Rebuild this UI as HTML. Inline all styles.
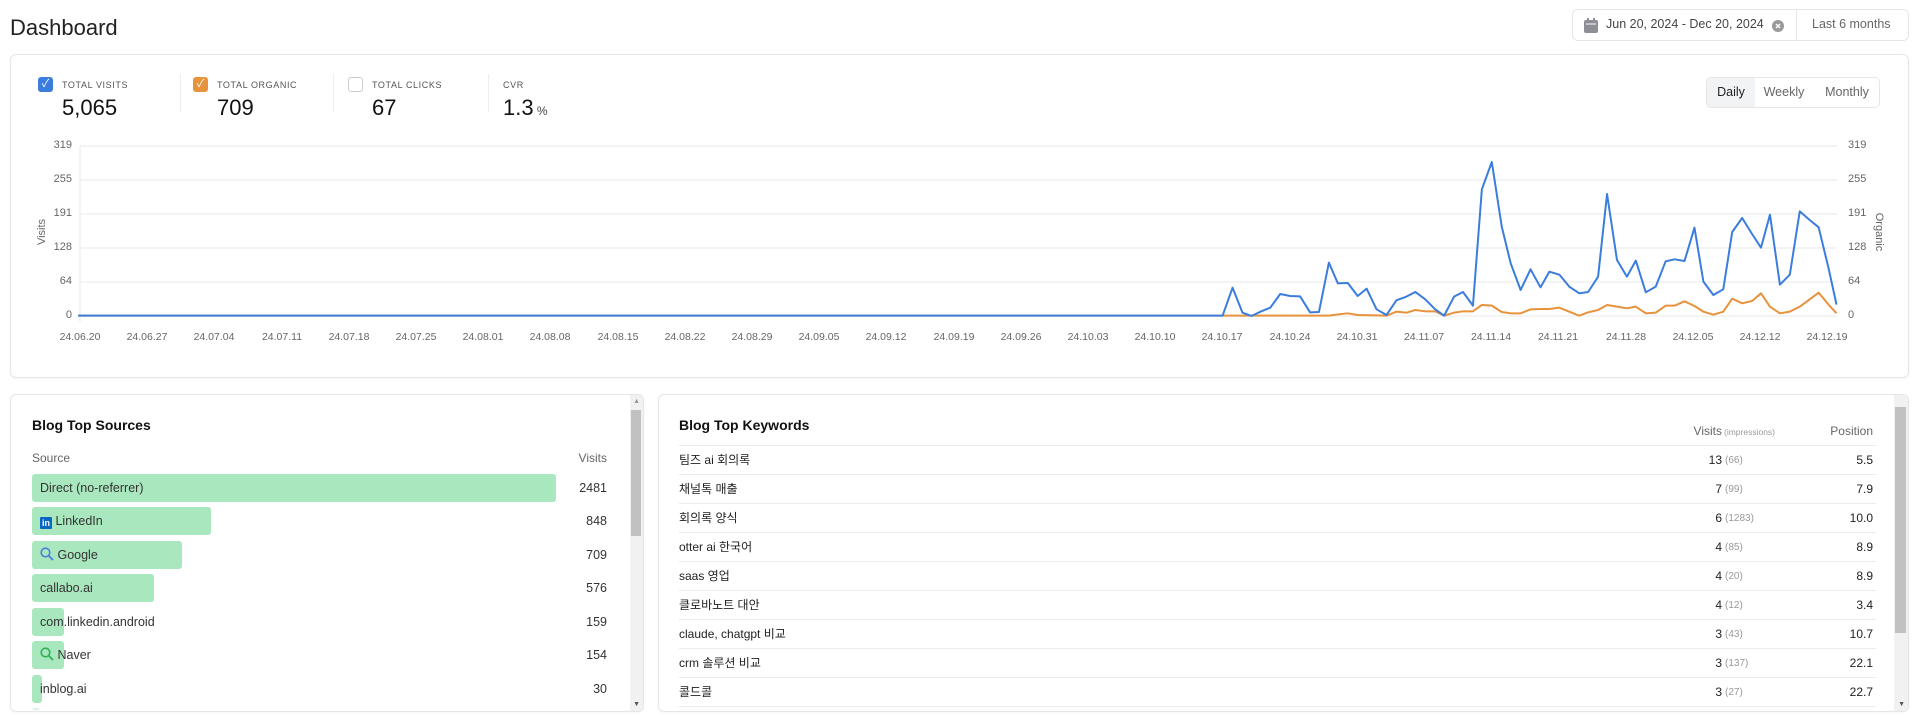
<!DOCTYPE html>
<html><head><meta charset="utf-8"><style>
*{box-sizing:border-box;margin:0;padding:0}
body{width:1920px;height:716px;background:#fff;font-family:"Liberation Sans","Noto Sans CJK KR",sans-serif;color:#222;position:relative;overflow:hidden}
.abs{position:absolute}
.card{position:absolute;border:1px solid #e6e6e6;border-radius:6px;background:#fff;box-shadow:0 1px 2px rgba(0,0,0,.04)}
.lbl{position:absolute;font-size:9px;letter-spacing:.6px;color:#555;top:80px}
.num{position:absolute;font-size:22px;color:#111;top:95px}
.cb{position:absolute;top:77px;width:15px;height:15px;border-radius:3px;color:#fff;font-size:11px;line-height:15px;text-align:center}
.sep{position:absolute;top:74px;width:1px;height:38px;background:#eee}
.yl{position:absolute;font-size:11px;color:#666;width:40px}
.xl{position:absolute;top:331px;font-size:10.5px;color:#666;width:60px;text-align:center}
.row{position:absolute;left:32px;height:28px;font-size:12.5px;line-height:28px}
.bar{position:absolute;left:0;top:0;height:28px;background:#a9e7be;border-radius:3px}
.rt{position:absolute;left:8px;top:0;white-space:nowrap;color:#333}
.rv{position:absolute;left:520px;width:55px;text-align:right;color:#333}
.kr{position:absolute;left:679px;width:1197px;height:29px;border-bottom:1px solid #ebebeb;font-size:12px;line-height:28px;color:#222}
.kr .v{position:absolute;right:154px;width:60px;text-align:right}
.kr .i{position:absolute;left:1046px;top:1px;font-size:10px;line-height:28px;color:#999}
.kr .p{position:absolute;right:3px;text-align:right}
</style></head><body>
<div class="abs" style="left:10px;top:15px;font-size:22px;color:#222">Dashboard</div>

<div class="abs" style="left:1572px;top:9px;width:337px;height:32px;border:1px solid #e6e6e6;border-radius:6px">
 <svg class="abs" style="left:11px;top:8px" width="14" height="15" viewBox="0 0 14 15"><rect x="0" y="2" width="14" height="13" rx="2" fill="#8e8e96"/><rect x="3" y="0" width="2" height="4" fill="#8e8e96"/><rect x="9" y="0" width="2" height="4" fill="#8e8e96"/><rect x="2" y="5.5" width="10" height="1" fill="#fff"/></svg>
 <div class="abs" style="left:33px;top:7px;font-size:12.5px;color:#444">Jun 20, 2024 - Dec 20, 2024</div>
 <svg class="abs" style="left:199px;top:10px" width="12" height="12" viewBox="0 0 12 12"><circle cx="6" cy="6" r="6" fill="#999"/><path d="M4 4L8 8M8 4L4 8" stroke="#fff" stroke-width="1.4"/></svg>
 <div class="abs" style="left:223px;top:0;width:1px;height:30px;background:#e6e6e6"></div>
 <div class="abs" style="left:239px;top:7px;font-size:12.5px;color:#666">Last 6 months</div>
</div>

<div class="card" style="left:10px;top:54px;width:1899px;height:324px"></div>
<div class="cb" style="left:38px;background:#3b7ddd">✓</div>
<div class="lbl" style="left:62px">TOTAL VISITS</div><div class="num" style="left:62px">5,065</div>
<div class="sep" style="left:180px"></div>
<div class="cb" style="left:193px;background:#e8923c">✓</div>
<div class="lbl" style="left:217px">TOTAL ORGANIC</div><div class="num" style="left:217px">709</div>
<div class="sep" style="left:333px"></div>
<div class="cb" style="left:348px;border:1px solid #ccc;background:#fff"></div>
<div class="lbl" style="left:372px">TOTAL CLICKS</div><div class="num" style="left:372px">67</div>
<div class="sep" style="left:488px"></div>
<div class="lbl" style="left:503px">CVR</div><div class="num" style="left:503px">1.3<span style="font-size:12px;color:#444"> %</span></div>

<div class="abs" style="left:1706px;top:77px;width:174px;height:31px;border:1px solid #e6e6e6;border-radius:5px;font-size:12.5px;line-height:29px;color:#666;overflow:hidden">
 <div class="abs" style="left:0;top:0;width:48px;height:29px;background:#f2f3f5;color:#222;text-align:center">Daily</div>
 <div class="abs" style="left:48px;top:0;width:58px;text-align:center">Weekly</div>
 <div class="abs" style="left:108px;top:0;width:64px;text-align:center">Monthly</div>
</div>

<svg class="abs" style="left:0;top:0" width="1920" height="400">
 <g stroke="#e8e8e8" stroke-width="1">
  <line x1="80" y1="146" x2="1837" y2="146"/><line x1="80" y1="180" x2="1837" y2="180"/><line x1="80" y1="214" x2="1837" y2="214"/><line x1="80" y1="248" x2="1837" y2="248"/><line x1="80" y1="282" x2="1837" y2="282"/><line x1="80" y1="316" x2="1837" y2="316"/>
  <line x1="80" y1="146" x2="80" y2="322"/>
 </g>
 <g transform="translate(1162,140) scale(0.4967,0.3333)" fill="none" stroke-width="2" stroke-linejoin="round">
  <polyline vector-effect="non-scaling-stroke" stroke="#e8923c" points="-2182,527 336,527 356,523 374,520 394,525 452,527 472,515 492,518 510,510 530,514 550,514 568,527 588,518 606,514 626,514 644,495 664,497 684,516 702,520 722,520 742,508 762,507 780,507 800,503 820,515 840,527 858,517 878,510 896,495 916,500 936,505 954,500 974,520 994,518 1014,497 1032,497 1052,484 1072,498 1090,515 1110,524 1130,515 1148,476 1168,490 1188,483 1206,460 1224,500 1244,520 1264,515 1284,500 1304,478 1322,458 1342,494 1358,520"/>
  <polyline vector-effect="non-scaling-stroke" stroke="#3b7ddd" points="-2182,527 122,527 142,443 162,518 180,528 200,514 218,503 238,462 258,468 278,469 298,517 316,516 336,368 354,430 374,429 394,468 412,446 432,508 452,525 472,481 492,470 510,456 530,478 550,508 568,527 588,470 606,456 626,497 644,148 664,66 684,260 702,370 722,450 742,388 762,442 780,395 800,404 820,440 840,460 858,456 878,410 896,162 916,360 936,410 954,362 974,457 994,440 1014,364 1032,358 1052,363 1072,263 1090,425 1110,465 1130,448 1148,276 1168,234 1188,282 1206,323 1224,224 1244,434 1264,404 1284,214 1304,240 1322,262 1342,385 1358,494"/>
 </g>
 <text x="45" y="232" transform="rotate(-90 45 232)" font-size="11" fill="#666" text-anchor="middle" font-family="Liberation Sans">Visits</text>
 <text x="1876" y="232" transform="rotate(90 1876 232)" font-size="11" fill="#666" text-anchor="middle" font-family="Liberation Sans">Organic</text>
</svg>
<div class="yl" style="left:32px;top:139px;text-align:right">319</div>
<div class="yl" style="left:32px;top:173px;text-align:right">255</div>
<div class="yl" style="left:32px;top:207px;text-align:right">191</div>
<div class="yl" style="left:32px;top:241px;text-align:right">128</div>
<div class="yl" style="left:32px;top:275px;text-align:right">64</div>
<div class="yl" style="left:32px;top:309px;text-align:right">0</div>
<div class="yl" style="left:1848px;top:139px">319</div>
<div class="yl" style="left:1848px;top:173px">255</div>
<div class="yl" style="left:1848px;top:207px">191</div>
<div class="yl" style="left:1848px;top:241px">128</div>
<div class="yl" style="left:1848px;top:275px">64</div>
<div class="yl" style="left:1848px;top:309px">0</div>

<div class="xl" style="left:50px">24.06.20</div><div class="xl" style="left:117px">24.06.27</div><div class="xl" style="left:184px">24.07.04</div><div class="xl" style="left:252px">24.07.11</div><div class="xl" style="left:319px">24.07.18</div><div class="xl" style="left:386px">24.07.25</div><div class="xl" style="left:453px">24.08.01</div><div class="xl" style="left:520px">24.08.08</div><div class="xl" style="left:588px">24.08.15</div><div class="xl" style="left:655px">24.08.22</div><div class="xl" style="left:722px">24.08.29</div><div class="xl" style="left:789px">24.09.05</div><div class="xl" style="left:856px">24.09.12</div><div class="xl" style="left:924px">24.09.19</div><div class="xl" style="left:991px">24.09.26</div><div class="xl" style="left:1058px">24.10.03</div><div class="xl" style="left:1125px">24.10.10</div><div class="xl" style="left:1192px">24.10.17</div><div class="xl" style="left:1260px">24.10.24</div><div class="xl" style="left:1327px">24.10.31</div><div class="xl" style="left:1394px">24.11.07</div><div class="xl" style="left:1461px">24.11.14</div><div class="xl" style="left:1528px">24.11.21</div><div class="xl" style="left:1596px">24.11.28</div><div class="xl" style="left:1663px">24.12.05</div><div class="xl" style="left:1730px">24.12.12</div><div class="xl" style="left:1797px">24.12.19</div>

<div class="card" style="left:10px;top:394px;width:634px;height:318px;overflow:hidden">
 <div class="abs" style="right:0;top:0;width:13px;height:316px;background:#f1f1f1"></div>
 <div class="abs" style="right:2px;top:15px;width:10px;height:126px;background:#c1c1c1"></div>
 <div class="abs" style="right:3px;top:3px;font-size:7px;color:#999">▲</div>
 <div class="abs" style="right:3px;bottom:3px;font-size:7px;color:#555">▼</div>
</div>
<div class="abs" style="left:32px;top:417px;font-size:14px;font-weight:bold;color:#111">Blog Top Sources</div>
<div class="abs" style="left:32px;top:451px;font-size:12px;color:#666">Source</div>
<div class="abs" style="left:560px;top:451px;width:47px;text-align:right;font-size:12px;color:#666">Visits</div>
<div style="position:absolute;left:0;top:0;width:644px;height:710px;overflow:hidden">
<div class="row" style="top:474px"><div class="bar" style="width:524px"></div><div class="rt">Direct (no-referrer)</div><div class="rv">2481</div></div>
<div class="row" style="top:507px"><div class="bar" style="width:179px"></div><div class="rt"><span style="display:inline-block;width:12px;height:12px;background:#0a66c2;color:#fff;font-size:9px;line-height:12px;text-align:center;font-weight:bold;vertical-align:-1px;border-radius:1px">in</span> LinkedIn</div><div class="rv">848</div></div>
<div class="row" style="top:541px"><div class="bar" style="width:150px"></div><div class="rt"><svg width="14" height="14" viewBox="0 0 14 14" style="vertical-align:-2px"><circle cx="5.5" cy="5.5" r="4.3" fill="none" stroke="#4a7fe0" stroke-width="1.6"/><line x1="8.6" y1="8.6" x2="13" y2="13" stroke="#4a7fe0" stroke-width="1.8"/></svg> Google</div><div class="rv">709</div></div>
<div class="row" style="top:574px"><div class="bar" style="width:122px"></div><div class="rt">callabo.ai</div><div class="rv">576</div></div>
<div class="row" style="top:608px"><div class="bar" style="width:32px"></div><div class="rt">com.linkedin.android</div><div class="rv">159</div></div>
<div class="row" style="top:641px"><div class="bar" style="width:32px"></div><div class="rt"><svg width="14" height="14" viewBox="0 0 14 14" style="vertical-align:-2px"><circle cx="5.5" cy="5.5" r="4.3" fill="none" stroke="#2fb157" stroke-width="1.6"/><line x1="8.6" y1="8.6" x2="13" y2="13" stroke="#2fb157" stroke-width="1.8"/></svg> Naver</div><div class="rv">154</div></div>
<div class="row" style="top:675px"><div class="bar" style="width:10px"></div><div class="rt">inblog.ai</div><div class="rv">30</div></div>
<div class="row" style="top:708px"><div class="bar" style="width:8px;background:#d6f3e0"></div></div>
</div>

<div class="card" style="left:658px;top:394px;width:1251px;height:318px;overflow:hidden">
 <div class="abs" style="right:0;top:0;width:14px;height:316px;background:#f1f1f1"></div>
 <div class="abs" style="right:2px;top:12px;width:11px;height:226px;background:#c1c1c1"></div>
 <div class="abs" style="right:3px;bottom:3px;font-size:7px;color:#555">▼</div>
</div>
<div class="abs" style="left:679px;top:417px;font-size:14px;font-weight:bold;color:#111">Blog Top Keywords</div>
<div class="abs" style="left:1600px;top:424px;width:122px;text-align:right;font-size:12px;color:#666">Visits</div>
<div class="abs" style="left:1724px;top:427px;font-size:8.5px;color:#999">(impressions)</div>
<div class="abs" style="left:1790px;top:424px;width:83px;text-align:right;font-size:12px;color:#666">Position</div>
<div class="abs" style="left:679px;top:445px;width:1197px;height:1px;background:#ebebeb"></div>
<div class="kr" style="top:446px">팀즈 ai 회의록<span class="v">13</span><span class="i">(66)</span><span class="p">5.5</span></div>
<div class="kr" style="top:475px">채널톡 매출<span class="v">7</span><span class="i">(99)</span><span class="p">7.9</span></div>
<div class="kr" style="top:504px">회의록 양식<span class="v">6</span><span class="i">(1283)</span><span class="p">10.0</span></div>
<div class="kr" style="top:533px">otter ai 한국어<span class="v">4</span><span class="i">(85)</span><span class="p">8.9</span></div>
<div class="kr" style="top:562px">saas 영업<span class="v">4</span><span class="i">(20)</span><span class="p">8.9</span></div>
<div class="kr" style="top:591px">클로바노트 대안<span class="v">4</span><span class="i">(12)</span><span class="p">3.4</span></div>
<div class="kr" style="top:620px">claude, chatgpt 비교<span class="v">3</span><span class="i">(43)</span><span class="p">10.7</span></div>
<div class="kr" style="top:649px">crm 솔루션 비교<span class="v">3</span><span class="i">(137)</span><span class="p">22.1</span></div>
<div class="kr" style="top:678px">콜드콜<span class="v">3</span><span class="i">(27)</span><span class="p">22.7</span></div>
</body></html>
